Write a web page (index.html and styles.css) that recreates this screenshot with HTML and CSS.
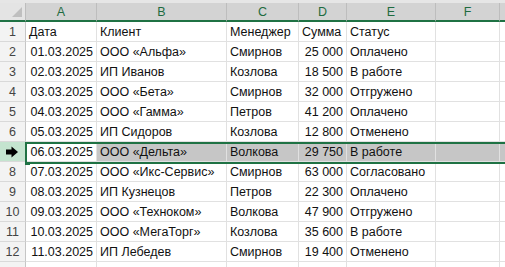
FILE: index.html
```html
<!DOCTYPE html>
<html>
<head>
    <title>Заказы</title>
    <link rel="stylesheet" href="styles.css">
</head>
<body>
    <div class="strip"></div>
    <div class="sheet">
        <table class="grid">
            <colgroup>
                <col class="c-hdr">
                <col class="c-a">
                <col class="c-b">
                <col class="c-c">
                <col class="c-d">
                <col class="c-e">
                <col class="c-f">
                <col class="c-g">
            </colgroup>
            <thead>
                <tr>
                    <th class="corner"><span class="tri"></span></th>
                    <th>A</th><th>B</th><th>C</th><th>D</th><th>E</th><th>F</th><th></th>
                </tr>
            </thead>
            <tbody>
                <tr><td class="rh">1</td><td>Дата</td><td>Клиент</td><td>Менеджер</td><td>Сумма</td><td>Статус</td><td></td><td></td></tr>
                <tr><td class="rh">2</td><td class="num">01.03.2025</td><td>ООО «Альфа»</td><td>Смирнов</td><td class="num">25 000</td><td>Оплачено</td><td></td><td></td></tr>
                <tr><td class="rh">3</td><td class="num">02.03.2025</td><td>ИП Иванов</td><td>Козлова</td><td class="num">18 500</td><td>В работе</td><td></td><td></td></tr>
                <tr><td class="rh">4</td><td class="num">03.03.2025</td><td>ООО «Бета»</td><td>Смирнов</td><td class="num">32 000</td><td>Отгружено</td><td></td><td></td></tr>
                <tr><td class="rh">5</td><td class="num">04.03.2025</td><td>ООО «Гамма»</td><td>Петров</td><td class="num">41 200</td><td>Оплачено</td><td></td><td></td></tr>
                <tr><td class="rh">6</td><td class="num">05.03.2025</td><td>ИП Сидоров</td><td>Козлова</td><td class="num">12 800</td><td>Отменено</td><td></td><td></td></tr>
                <tr class="picked">
                    <td class="rh rh-on">
                        <svg class="arrow" width="14" height="12" viewBox="0 0 14 12">
                            <path d="M1 3.5 H6.5 V0.5 L13 6 L6.5 11.5 V8.5 H1 Z" fill="#000"/>
                        </svg>
                    </td>
                    <td class="num active">06.03.2025</td><td>ООО «Дельта»</td><td>Волкова</td><td class="num">29 750</td><td>В работе</td><td></td><td></td>
                </tr>
                <tr><td class="rh">8</td><td class="num">07.03.2025</td><td>ООО «Икс-Сервис»</td><td>Смирнов</td><td class="num">63 000</td><td>Согласовано</td><td></td><td></td></tr>
                <tr><td class="rh">9</td><td class="num">08.03.2025</td><td>ИП Кузнецов</td><td>Петров</td><td class="num">22 300</td><td>Оплачено</td><td></td><td></td></tr>
                <tr><td class="rh">10</td><td class="num">09.03.2025</td><td>ООО «Техноком»</td><td>Волкова</td><td class="num">47 900</td><td>Отгружено</td><td></td><td></td></tr>
                <tr><td class="rh">11</td><td class="num">10.03.2025</td><td>ООО «МегаТорг»</td><td>Козлова</td><td class="num">35 600</td><td>В работе</td><td></td><td></td></tr>
                <tr><td class="rh">12</td><td class="num">11.03.2025</td><td>ИП Лебедев</td><td>Смирнов</td><td class="num">19 400</td><td>Отменено</td><td></td><td></td></tr>
                <tr><td class="rh"></td><td></td><td></td><td></td><td></td><td></td><td></td><td></td></tr>
            </tbody>
        </table>
        <!-- selection frame around row 7 -->
        <div class="selection"><span class="handle"></span></div>
    </div>
</body>
</html>
```

FILE: styles.css
```css
html, body {
    width: 505px;
    height: 267px;
    overflow: hidden;
}

body {
    margin: 0;
    background: #fff;
    font-family: "Liberation Sans", Arial, sans-serif;
    font-size: 12.5px;
    color: #111;
}

.strip {
    height: 3px;
    background: #e6e6e6;
}

.sheet {
    position: relative;
    width: 505px;
    height: 264px;
    overflow: hidden;
}

.grid {
    table-layout: fixed;
    border-collapse: separate;
    border-spacing: 0;
    width: 540px;
}

.c-hdr { width: 26px; }
.c-a { width: 71px; }
.c-b { width: 130px; }
.c-c { width: 72px; }
.c-d { width: 48px; }
.c-e { width: 89px; }
.c-f { width: 64px; }
.c-g { width: 40px; }

th {
    height: 17px;
    padding: 0;
    background: #d3d3d3;
    color: #1e6b3f;
    font-weight: normal;
    font-size: 12.5px;
    border-right: 1px solid #bdbdbd;
    border-bottom: 2px solid #1f7244;
    text-align: center;
}

th.corner {
    background: #e4e4e4;
    position: relative;
}

.tri {
    position: absolute;
    right: 3px;
    bottom: 3px;
    width: 0;
    height: 0;
    border-left: 10px solid transparent;
    border-bottom: 10px solid #bfbfbf;
}

td {
    height: 19px;
    padding: 0 3px;
    border-right: 1px solid #e1e1e1;
    border-bottom: 1px solid #e1e1e1;
    white-space: nowrap;
    overflow: hidden;
}

td.num {
    text-align: right;
}

td.rh {
    padding: 0;
    background: #f3f3f3;
    color: #444;
    text-align: center;
    border-right: 1px solid #c6c6c6;
    border-bottom: 1px solid #d9d9d9;
}

.picked td {
    background: #c6c6c6;
}

.picked td.active {
    background: #fff;
}

.picked td.rh-on {
    background: #c4e4cf;
    position: relative;
}

.arrow {
    position: absolute;
    left: 5px;
    top: 4px;
}

.selection {
    position: absolute;
    left: 25px;
    right: 0;
    top: 139px;
    height: 18px;
    border: 2px solid #1f7244;
    border-right: none;
    pointer-events: none;
}

.handle {
    position: absolute;
    left: -2px;
    bottom: -3px;
    width: 5px;
    height: 3px;
    background: #1f7244;
}
```
